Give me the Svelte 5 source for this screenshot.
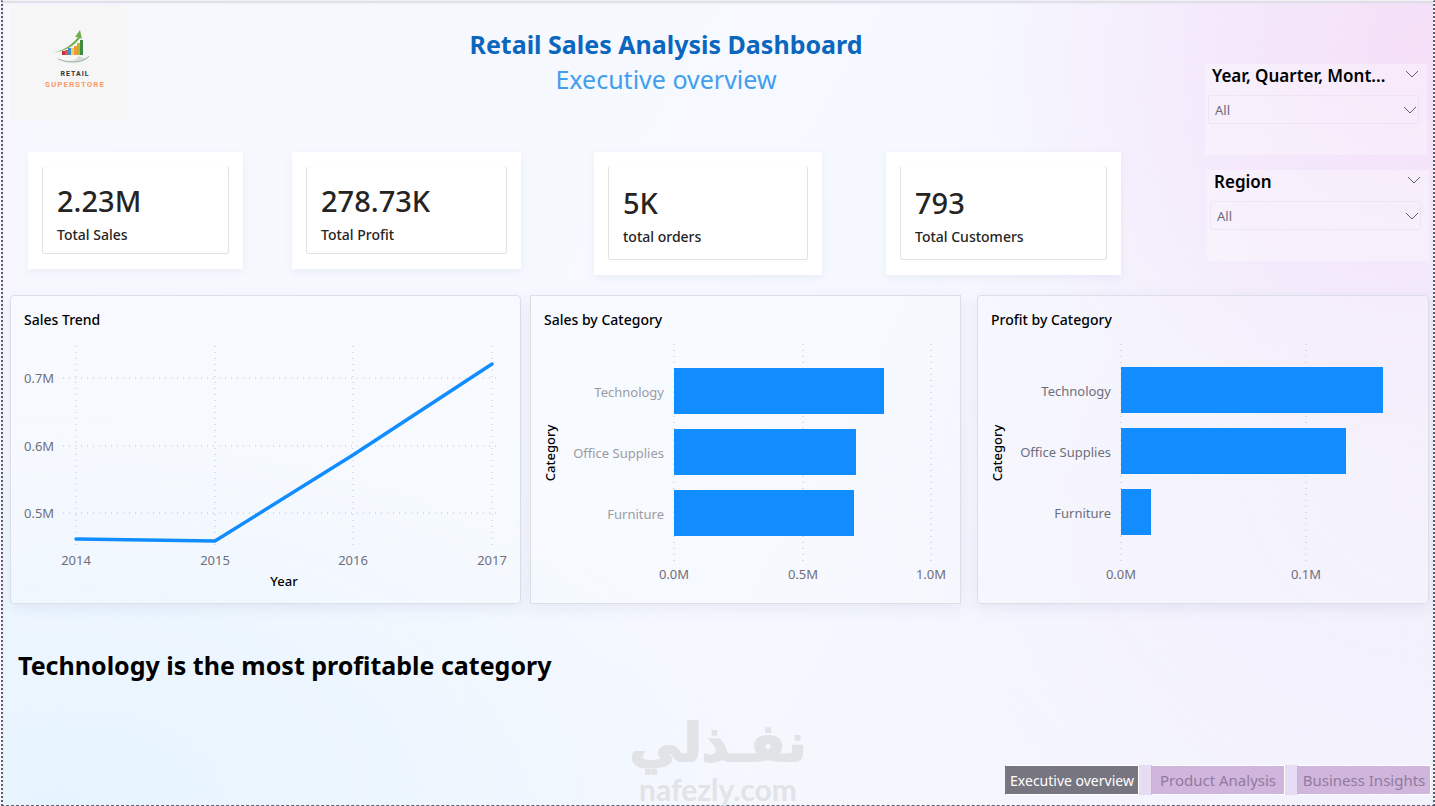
<script lang="ts">
  type Bar = { name: string; y: number; width: number };
  type Tick = { label: string; x: number };
  type BarChart = { title: string; width: number; tone: string; ticks: Tick[]; bars: Bar[] };

  const kpis = [
    { value: "2.23M", label: "Total Sales", tall: false },
    { value: "278.73K", label: "Total Profit", tall: false },
    { value: "5K", label: "total orders", tall: true },
    { value: "793", label: "Total Customers", tall: true },
  ];

  const slicers = [
    { id: "date", title: "Year, Quarter, Mont..." },
    { id: "region", title: "Region" },
  ];

  const years = [
    { label: "2014", x: 65, y: 199 },
    { label: "2015", x: 204, y: 201 },
    { label: "2016", x: 342, y: 115 },
    { label: "2017", x: 481, y: 24 },
  ];

  const sales = [
    { label: "0.7M", y: 38 },
    { label: "0.6M", y: 106 },
    { label: "0.5M", y: 173 },
  ];

  const trend = years.map((p) => `${p.x},${p.y}`).join(" ");

  const barCharts: BarChart[] = [
    {
      title: "Sales by Category",
      width: 429,
      tone: "light",
      ticks: [
        { label: "0.0M", x: 143 },
        { label: "0.5M", x: 272 },
        { label: "1.0M", x: 400 },
      ],
      bars: [
        { name: "Technology", y: 28, width: 210 },
        { name: "Office Supplies", y: 89, width: 182 },
        { name: "Furniture", y: 150, width: 180 },
      ],
    },
    {
      title: "Profit by Category",
      width: 450,
      tone: "dark",
      ticks: [
        { label: "0.0M", x: 143 },
        { label: "0.1M", x: 328 },
      ],
      bars: [
        { name: "Technology", y: 27, width: 262 },
        { name: "Office Supplies", y: 88, width: 225 },
        { name: "Furniture", y: 149, width: 30 },
      ],
    },
  ];

  const tabs = ["Executive overview", "Product Analysis", "Business Insights"];
  let active = $state("Executive overview");
</script>

{#snippet chevron()}
  <svg class="chevron" viewBox="0 0 14 8" aria-hidden="true">
    <path d="M1 1l6 6 6-6" />
  </svg>
{/snippet}

<div class="page">
  <div class="top">
    <div class="main">
      <header>
        <div class="logo">
          <svg viewBox="0 0 117 115" role="img" aria-label="Retail Superstore">
            <path d="M47 53q8 4 18 2l4-4q5 4 11 0-5 6-14 6-13 1-19-4z" fill="#d5dcd6" />
            <path d="M48 54q8 4 18 3 9-1 13-6" fill="none" stroke="#a3b5a8" stroke-width="1" />
            <rect x="52" y="46" width="3" height="4" fill="#c9303a" />
            <rect x="55" y="45" width="3" height="5" fill="#e0564a" />
            <rect x="58" y="43" width="3" height="7" fill="#3f8fd0" />
            <rect x="61" y="43" width="3" height="7" fill="#f5cf5a" />
            <rect x="64" y="41" width="3" height="9" fill="#ef9a35" />
            <rect x="67" y="38" width="3" height="12" fill="#b5b53a" />
            <rect x="70" y="35" width="3" height="15" fill="#3f8a42" />
            <path d="M42 48c11-2 20-8 26-16l-3 0 5-7 2 9-2-1c-6 8-14 13-28 15z" fill="#6fb04c" />
            <text class="retail" x="65" y="71">RETAIL</text>
            <text class="store" x="65" y="82">SUPERSTORE</text>
          </svg>
        </div>
        <div class="heading">
          <h1>Retail Sales Analysis Dashboard</h1>
          <p>Executive overview</p>
        </div>
      </header>

      <section class="kpis" aria-label="Key figures">
        {#each kpis as kpi}
          <div class="kpi" class:tall={kpi.tall}>
            <div class="inner">
              <strong>{kpi.value}</strong>
              <span>{kpi.label}</span>
            </div>
          </div>
        {/each}
      </section>
    </div>

    <aside>
      {#each slicers as slicer}
        <div class="slicer {slicer.id}">
          <div class="slicer-head">
            <label for={slicer.id}>{slicer.title}</label>
            <button aria-label="Collapse {slicer.title}">{@render chevron()}</button>
          </div>
          <div class="field">
            <select id={slicer.id}>
              <option>All</option>
            </select>
            {@render chevron()}
          </div>
        </div>
      {/each}
    </aside>
  </div>

  <section class="charts">
    <article class="card">
      <h2>Sales Trend</h2>
      <svg viewBox="0 0 509 263" role="img" aria-label="Sales Trend">
        {#each years as year}
          <line class="grid" x1={year.x} x2={year.x} y1="6" y2="209" />
          <text class="tick" x={year.x} y="225" text-anchor="middle">{year.label}</text>
        {/each}
        {#each sales as tick}
          <line class="grid" x1="52" x2="486" y1={tick.y} y2={tick.y} />
          <text class="tick" x="13" y={tick.y + 5}>{tick.label}</text>
        {/each}
        <polyline class="trend" points={trend} />
        <text class="axis" x="273" y="246" text-anchor="middle">Year</text>
      </svg>
    </article>

    {#each barCharts as chart}
      <article class="card {chart.tone}">
        <h2>{chart.title}</h2>
        <svg viewBox="0 0 {chart.width} 263" role="img" aria-label={chart.title}>
          {#each chart.ticks as tick}
            <line class="grid" x1={tick.x} x2={tick.x} y1="4" y2="224" />
            <text class="tick" x={tick.x} y="239" text-anchor="middle">{tick.label}</text>
          {/each}
          {#each chart.bars as bar}
            <rect class="bar" x="143" y={bar.y} width={bar.width} height="46" />
            <text class="name" x="133" y={bar.y + 29} text-anchor="end">{bar.name}</text>
          {/each}
          <text class="axis" transform="translate(24 113) rotate(-90)" text-anchor="middle">Category</text>
        </svg>
      </article>
    {/each}
  </section>

  <h2 class="insight">Technology is the most profitable category</h2>

  <nav aria-label="Report pages">
    {#each tabs as tab}
      <button class:active={tab === active} onclick={() => (active = tab)}>{tab}</button>
    {/each}
  </nav>

  <div class="watermark">
    <span lang="ar" dir="rtl">نفـذلي</span>
    <small>nafezly.com</small>
  </div>
</div>

<style>
  :global(body) {
    margin: 0;
    background: #f6f6fb;
  }

  .page {
    position: relative;
    box-sizing: border-box;
    min-height: 100vh;
    margin-left: 1px;
    padding: 4px 4px 10px 7px;
    display: flex;
    flex-direction: column;
    border: 2px dotted #5d5d70;
    border-top: 1px solid #f2f2f4;
    border-bottom: 1px dashed #5d5d70;
    font-family: "Noto Sans", "Open Sans", sans-serif;
    color: #000;
    box-shadow: inset 0 2px 2px #dcdce6;
    background:
      radial-gradient(ellipse 32% 52% at 100% 6%, #f5dff8 0%, rgba(244, 228, 250, 0.7) 50%, rgba(244, 236, 252, 0) 100%),
      radial-gradient(ellipse 48% 50% at 4% 100%, #e6f4ff 0%, rgba(233, 245, 255, 0.7) 50%, rgba(240, 246, 255, 0) 100%),
      radial-gradient(ellipse 40% 60% at 100% 60%, #f3effc 0%, rgba(243, 240, 253, 0) 100%),
      linear-gradient(120deg, #f7f8ff 0%, #f6f9ff 45%, #f3f4fe 100%);
  }

  .top {
    display: grid;
    grid-template-columns: 1fr 224px;
    min-height: 290px;
  }

  header {
    display: flex;
  }

  .logo {
    width: 117px;
    height: 115px;
    background: #f6f6f7;
  }

  .logo svg {
    display: block;
  }

  .logo text {
    font-family: Roboto, "Liberation Sans", sans-serif;
    font-weight: 700;
    text-anchor: middle;
    letter-spacing: 1px;
  }

  .retail {
    font-size: 7px;
    fill: #33333a;
  }

  .store {
    font-size: 8px;
    fill: #f79b6a;
  }

  .heading {
    flex: 1;
    padding-top: 22px;
    text-align: center;
    font-size: 25px;
    line-height: 35px;
  }

  h1 {
    margin: 0;
    font-size: inherit;
    font-weight: 700;
    color: #0b66bd;
  }

  .heading p {
    margin: 0;
    color: #429fec;
  }

  .kpis {
    display: grid;
    grid-template-columns: 18fr 215fr 49fr 229fr 73fr 228fr 64fr 235fr 84fr;
    align-items: start;
    margin-top: 32px;
  }

  .kpi {
    padding: 14px 14px 15px;
    background: #fff;
    box-shadow: 0 3px 8px rgba(90, 90, 160, 0.07);
  }

  .kpi:nth-child(1) {
    grid-column: 2;
  }

  .kpi:nth-child(2) {
    grid-column: 4;
  }

  .kpi:nth-child(3) {
    grid-column: 6;
  }

  .kpi:nth-child(4) {
    grid-column: 8;
  }

  .inner {
    display: flex;
    flex-direction: column;
    padding: 14px 14px 6px;
    border: 1px solid #e2e2e2;
    border-top-color: #fdfdfd;
    border-radius: 3px;
    color: #252423;
  }

  .tall .inner {
    padding: 16px 14px 10px;
  }

  .inner strong {
    font-size: 29px;
    line-height: 40px;
    font-weight: 500;
  }

  .inner span {
    margin-top: 2px;
    font-size: 14px;
    line-height: 24px;
    font-weight: 500;
  }

  aside {
    display: flex;
    flex-direction: column;
    gap: 15px;
    padding-top: 59px;
  }

  .slicer {
    box-sizing: border-box;
    width: 222px;
    height: 91px;
    padding: 0 8px 0 3px;
    background: rgba(255, 255, 255, 0.32);
  }

  .region {
    align-self: flex-end;
  }

  .slicer-head {
    display: flex;
    justify-content: space-between;
    align-items: center;
    height: 24px;
    padding-left: 4px;
  }

  .slicer-head label {
    font-size: 17px;
    line-height: 24px;
    font-weight: 600;
    white-space: nowrap;
  }

  .slicer-head button {
    display: flex;
    padding: 0 0 4px;
    border: 0;
    background: none;
    cursor: pointer;
  }

  .chevron {
    width: 14px;
    height: 8px;
    fill: none;
    stroke: #605e6a;
    stroke-width: 1;
  }

  .field {
    position: relative;
    margin-top: 7px;
  }

  .field .chevron {
    position: absolute;
    right: 2px;
    top: 11px;
    pointer-events: none;
  }

  select {
    appearance: none;
    display: block;
    width: 100%;
    height: 29px;
    padding: 0 6px;
    border: 1px solid rgba(200, 190, 215, 0.2);
    border-radius: 2px;
    background: transparent;
    font: 13px "Noto Sans", "Open Sans", sans-serif;
    color: #6d6a75;
  }

  .charts {
    display: grid;
    grid-template-columns: 511fr 9fr 431fr 16fr 452fr;
  }

  .card {
    border: 1px solid #dcdee8;
    border-radius: 4px;
    background: rgba(255, 255, 255, 0.15);
    box-shadow: 0 4px 14px rgba(90, 100, 150, 0.1);
  }

  .card:nth-child(2) {
    grid-column: 3;
  }

  .card:nth-child(3) {
    grid-column: 5;
  }

  .card h2 {
    margin: 0;
    padding: 12px 13px 8px;
    font-size: 14px;
    line-height: 24px;
    font-weight: 500;
  }

  .card svg {
    display: block;
    width: 100%;
  }

  .card.light {
    border-radius: 0;
  }

  .grid {
    stroke: #bfc1cb;
    stroke-width: 1;
    stroke-dasharray: 1 5;
  }

  .tick,
  .name {
    font-size: 13px;
    fill: #6f6f7b;
  }

  .light .name {
    fill: #9a9ca5;
  }

  .axis {
    font-size: 13px;
    font-weight: 500;
  }

  .trend {
    fill: none;
    stroke: #118dff;
    stroke-width: 3.5;
    stroke-linecap: round;
    stroke-linejoin: round;
  }

  .bar {
    fill: #118dff;
  }

  .insight {
    margin: 43px 0 0 8px;
    font-size: 25px;
    line-height: 36px;
    font-weight: 700;
  }

  nav {
    display: flex;
    gap: 12px;
    margin-top: auto;
    margin-left: auto;
    margin-right: -2px;
    background: #e6dcf4;
  }

  nav button {
    width: 134px;
    height: 30px;
    padding: 0;
    border: 1px solid #fff;
    border-left-color: #cbb2dc;
    background: #d0b5dd;
    font: 15px "Noto Sans", "Open Sans", sans-serif;
    color: #917b9f;
    white-space: nowrap;
    cursor: pointer;
  }

  nav button.active {
    border-left-color: #77757f;
    background: #77757f;
    font-size: 14px;
    color: #fff;
  }

  .watermark {
    position: absolute;
    left: 50%;
    bottom: 0;
    transform: translateX(-50%);
    display: flex;
    flex-direction: column;
    align-items: center;
    color: #e1e3e7;
    font-weight: 700;
    pointer-events: none;
  }

  .watermark span {
    font-family: "DejaVu Sans", sans-serif;
    font-size: 52px;
    line-height: 60px;
    -webkit-text-stroke: 2px #e1e3e7;
  }

  .watermark small {
    font-family: Lato, sans-serif;
    font-size: 30px;
    line-height: 32px;
  }
</style>
